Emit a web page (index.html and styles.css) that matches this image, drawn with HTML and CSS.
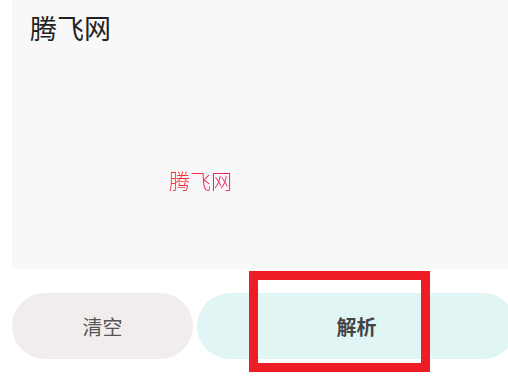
FILE: index.html
```html
<!DOCTYPE html>
<html lang="zh">
<head>
<meta charset="utf-8">
<link rel="stylesheet" href="styles.css">
</head>
<body>
<div class="page">
  <div class="panel">
    <div class="title">腾飞网</div>
    <div class="tag">腾飞网</div>
  </div>
  <div class="actions">
    <button class="btn clear">清空</button>
    <button class="btn parse">解析</button>
  </div>
  <div class="mark"></div>
</div>
</body>
</html>
```
FILE: styles.css
```css
html {
  overflow: hidden;
}
body {
  margin: 0;
  padding: 0;
  min-height: 100vh;
  background: #ffffff;
}
.page {
  position: relative;
  width: 504px;
  min-height: 392px;
  padding: 0 12px;
  font-family: "Noto Sans CJK SC", "Noto Sans", sans-serif;
}
.panel {
  margin-top: -12px;
  height: 281px;
  box-sizing: border-box;
  background: #f8f8f8;
  border-radius: 8px;
  padding: 21px 18px 0 18px;
}
.title {
  font-size: 27px;
  line-height: 38px;
  color: #222222;
}
.tag {
  margin-top: 118px;
  margin-left: 139px;
  font-size: 21px;
  line-height: 30px;
  font-weight: 300;
  color: #f5303a;
  background: linear-gradient(90deg, #ff3a2a, #f8264e 50%, #f0207a);
  -webkit-background-clip: text;
  background-clip: text;
  -webkit-text-fill-color: transparent;
  display: inline-block;
}
.actions {
  display: flex;
  gap: 4px;
  margin-top: 24px;
}
.btn {
  height: 66px;
  border: none;
  border-radius: 33px;
  font-family: "Noto Sans CJK SC", "Noto Sans", sans-serif;
  font-size: 20px;
  padding: 0;
}
.clear {
  width: 181px;
  background: #f2eded;
  color: #555555;
}
.parse {
  flex: 1;
  background: #e0f5f4;
  color: #444444;
  font-weight: 700;
}
.mark {
  position: absolute;
  left: 249px;
  top: 283px;
  width: 163px;
  height: 83px;
  border: 9px solid #ee1c25;
}
```
